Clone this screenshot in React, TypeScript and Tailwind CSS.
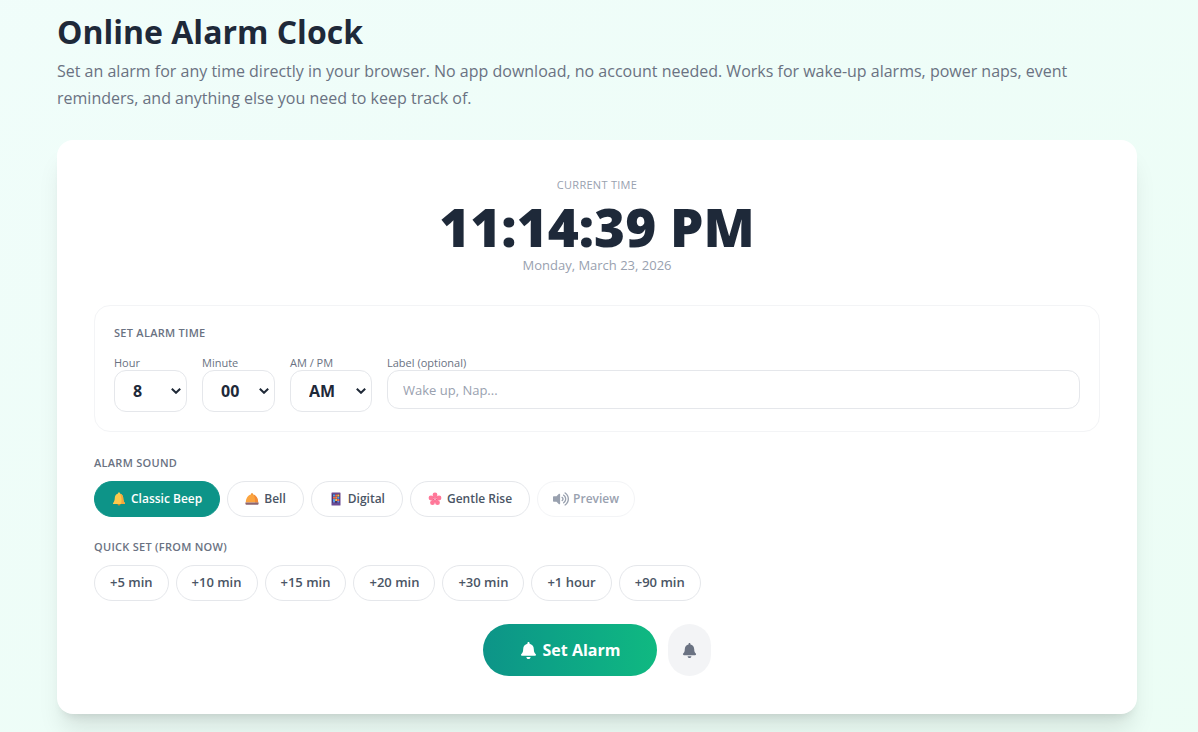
import { useState } from 'react';
import type { ReactNode } from 'react';
import { FaBell, FaVolumeUp } from 'react-icons/fa';

function BellEmoji() {
  return (
    <svg viewBox="0 0 14 14" className="size-[14px]" aria-hidden="true">
      <circle cx="7" cy="12" r="1.5" fill="#d98a1c" />
      <path d="M7 .5c.8 0 1.2.5 1.2 1.2 2 .5 2.9 2 3 4.1.1 2.600.6 3.900 1.700 5.100.3.500.1 1.100-.5 1.100H1.600c-.6 0-.8-.6-.5-1.100C2.200 9.700 2.700 8.400 2.800 5.800c.1-2.100 1-3.600 3-4.100C5.800 1 6.200.5 7 .5z" fill="#fcc94c" />
      <path d="M8.200 1.700c2 .5 2.900 2 3 4.100.1 2.600.6 3.900 1.700 5.100.3.500.1 1.100-.5 1.100H9c.8-2.500.9-6.500-.8-10.300z" fill="#f5a53b" />
    </svg>
  );
}

function DeskBellEmoji() {
  return (
    <svg viewBox="0 0 14 14" className="size-[14px]" aria-hidden="true">
      <rect x="6" y="1.200" width="2" height="2" rx=".8" fill="#e88420" />
      <path d="M.8 10.500C.8 6 3.400 2.300 7 2.300s6.200 3.700 6.200 8.200z" fill="#fba43f" />
      <path d="M8.500 2.500c3 .9 4.700 4.300 4.700 8H10c.2-3-.2-5.600-1.500-8z" fill="#f28a38" />
      <path d="M.4 10.500h13.200v1c0 .8-.5 1.300-1.300 1.300H1.700c-.8 0-1.300-.5-1.300-1.300z" fill="#8b6570" />
    </svg>
  );
}

function PhoneEmoji() {
  return (
    <svg viewBox="0 0 14 14" className="size-[14px]" aria-hidden="true">
      <rect x="2.500" y=".5" width="9" height="13" rx=".6" fill="#6a4a94" />
      <rect x="3.200" y="2.200" width="7.600" height="8.600" fill="#43356e" />
      <path d="M4 2.500h2v2H4zM8.300 4.700h2v2h-2zM4 6.900h2v2H4z" fill="#48a4ee" />
      <path d="M6.200 2.500h1.900v2H6.200zM4 4.700h2v2H4zM8.300 6.900h2v2h-2z" fill="#f4694f" />
      <path d="M8.300 2.500h2v2h-2zM6.200 6.900h1.900v2H6.200z" fill="#fac04b" />
      <path d="M6.200 4.700h1.900v2H6.200z" fill="#f08a50" />
      <path d="M4 9.100h2v1.500H4zM8.300 9.100h2v1.500h-2z" fill="#6f8fe5" />
    </svg>
  );
}

function BlossomEmoji() {
  return (
    <svg viewBox="0 0 14 14" className="size-[14px]" aria-hidden="true">
      <g fill="#ff7899">
        <circle cx="7" cy="3" r="2.400" />
        <circle cx="11" cy="6" r="2.400" />
        <circle cx="9.500" cy="10.700" r="2.400" />
        <circle cx="4.500" cy="10.700" r="2.400" />
        <circle cx="3" cy="6" r="2.400" />
        <circle cx="7" cy="7.300" r="3.300" />
      </g>
      <circle cx="7" cy="7.300" r="2" fill="#ee4478" />
      <path d="M7 5v2.200m0 0 2-.6M7 7.200l1.300 1.800M7 7.200 5.700 9M7 7.200l-2-.6" stroke="#ffc1cd" strokeWidth=".8" />
    </svg>
  );
}

const sounds: { name: string; icon: ReactNode }[] = [
  { name: 'Classic Beep', icon: <BellEmoji /> },
  { name: 'Bell', icon: <DeskBellEmoji /> },
  { name: 'Digital', icon: <PhoneEmoji /> },
  { name: 'Gentle Rise', icon: <BlossomEmoji /> },
];

const quickTimes = ['+5 min', '+10 min', '+15 min', '+20 min', '+30 min', '+1 hour', '+90 min'];
const hours = Array.from({ length: 12 }, (_, i) => String(i + 1));
const minutes = Array.from({ length: 60 }, (_, i) => String(i).padStart(2, '0'));

function TimeSelect({ id, label, options, initial, width }: {
  id: string;
  label: string;
  options: string[];
  initial: string;
  width: string;
}) {
  return (
    <div>
      <label htmlFor={id} className="block text-[11px] leading-[15px] text-gray-500">{label}</label>
      <div className="grid items-center">
        <select
          id={id}
          defaultValue={initial}
          className={`col-start-1 row-start-1 block h-[42px] appearance-none rounded-xl border border-gray-200 bg-white pl-[18px] text-base font-bold text-gray-800 ${width}`}
        >
          {options.map((option) => <option key={option}>{option}</option>)}
        </select>
        <svg viewBox="0 0 10 6" className="pointer-events-none col-start-1 row-start-1 mr-[6px] h-[6px] w-[10px] justify-self-end" fill="none" stroke="#1f2937" strokeWidth="2" aria-hidden="true">
          <path d="m.8.8 4.200 4L9.200.8" />
        </svg>
      </div>
    </div>
  );
}

export default function App() {
  const [sound, setSound] = useState('Classic Beep');

  return (
    <main className="min-h-screen bg-linear-to-br from-teal-50 to-emerald-50 pt-3 pr-[61px] pb-[18px] pl-[57px] font-['Open_Sans','Noto_Sans',sans-serif]">
      <header className="mb-7">
        <h1 className="text-[32px] leading-10 font-bold text-gray-800">Online Alarm Clock</h1>
        <p className="mt-[6px] text-base leading-[27px] text-gray-500">
          Set an alarm for any time directly in your browser. No app download, no account needed. Works for wake-up alarms, power naps, event reminders, and anything else you need to keep track of.
        </p>
      </header>

      <div className="rounded-2xl bg-white px-[37px] pt-[37px] pb-[38px] shadow-xl">
        <section className="mb-[30px] text-center">
          <h2 className="text-[11px] leading-4 font-medium tracking-wide text-gray-400 uppercase">Current Time</h2>
          <p className="mt-[6px] font-['Noto_Sans','Open_Sans',sans-serif] text-[53px] leading-[56px] font-black text-gray-800">11:14:39 PM</p>
          <p className="text-[13px] leading-5 text-gray-400">Monday, March 23, 2026</p>
        </section>

        <section className="mb-[23px] rounded-2xl border border-gray-100 px-[19px] py-[19px]">
          <h2 className="mb-[14px] text-[11px] leading-4 font-semibold tracking-wide text-gray-500 uppercase">Set Alarm Time</h2>
          <div className="flex items-start gap-[15px]">
            <TimeSelect id="hour" label="Hour" options={hours} initial="8" width="w-[73px]" />
            <TimeSelect id="minute" label="Minute" options={minutes} initial="00" width="w-[73px]" />
            <TimeSelect id="period" label="AM / PM" options={['AM', 'PM']} initial="AM" width="w-[82px]" />
            <div className="min-w-0 flex-1">
              <label htmlFor="alarm-label" className="block text-[11px] leading-[15px] text-gray-500">Label (optional)</label>
              <input
                id="alarm-label"
                type="text"
                placeholder="Wake up, Nap..."
                className="block h-[39px] w-full rounded-xl border border-gray-200 px-[15px] text-[13px] text-gray-800 placeholder:text-gray-400"
              />
            </div>
          </div>
        </section>

        <section className="mb-[22px]">
          <h2 className="mb-[10px] text-[11px] leading-4 font-semibold tracking-wide text-gray-500 uppercase">Alarm Sound</h2>
          <div className="flex flex-wrap gap-[7px]">
            {sounds.map(({ name, icon }) => (
              <button
                key={name}
                type="button"
                aria-pressed={sound === name}
                onClick={() => setSound(name)}
                className={`flex h-9 items-center gap-[5px] rounded-full border px-[17px] text-[12px] font-semibold ${
                  sound === name ? 'border-[#0d9488] bg-[#0d9488] text-white' : 'border-gray-200 bg-white text-gray-600'
                }`}
              >
                {icon}
                {name}
              </button>
            ))}
            <button type="button" className="flex h-9 items-center gap-1 rounded-full border border-gray-100 px-[15px] text-[12px] font-semibold text-gray-400">
              <FaVolumeUp className="size-4" />
              Preview
            </button>
          </div>
        </section>

        <section className="mb-[23px]">
          <h2 className="mb-[10px] text-[11px] leading-4 font-semibold tracking-wide text-gray-500 uppercase">Quick Set (From Now)</h2>
          <div className="flex flex-wrap gap-[7px]">
            {quickTimes.map((time) => (
              <button key={time} type="button" className="h-9 rounded-full border border-gray-200 px-[15px] text-[13px] font-semibold text-gray-600">
                {time}
              </button>
            ))}
          </div>
        </section>

        <div className="flex justify-center gap-[11px]">
          <button type="button" className="flex h-[52px] items-center gap-[6px] rounded-full bg-linear-to-r from-[#0d9488] to-[#10b981] px-[37px] text-base font-bold text-white">
            <FaBell className="size-[17px]" />
            Set Alarm
          </button>
          <button type="button" aria-label="Notifications" className="flex h-[52px] w-[43px] items-center justify-center rounded-full bg-gray-100 text-gray-500">
            <FaBell className="size-[15px]" />
          </button>
        </div>
      </div>
    </main>
  );
}
